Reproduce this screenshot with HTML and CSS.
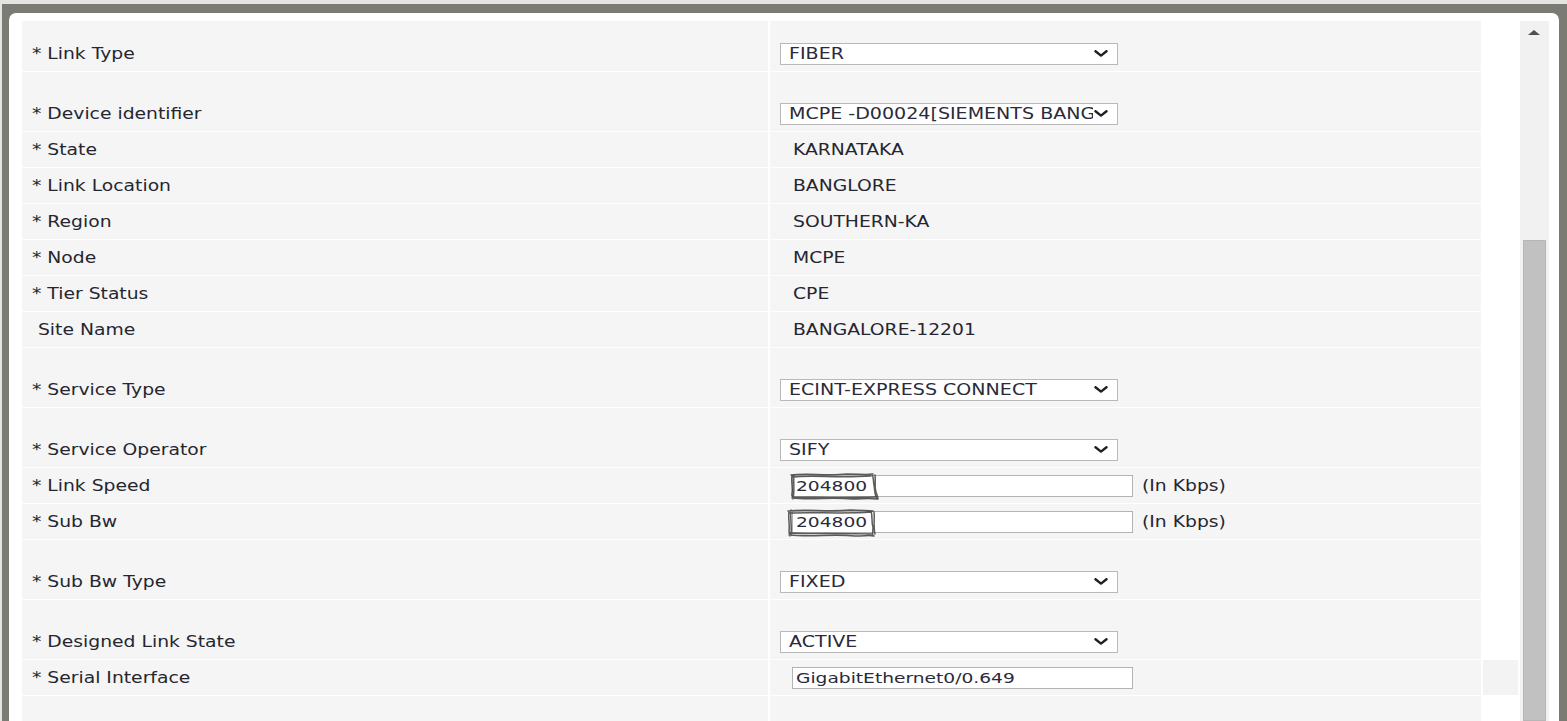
FILE: index.html
```html
<!DOCTYPE html>
<html lang="en">
<head>
<meta charset="utf-8">
<title>Link details</title>
<link rel="stylesheet" href="styles.css">
</head>
<body>
<div class="frame">
  <div class="panel">
    <div class="form">
      <div class="row first">
        <div class="cell label"><span class="t">* Link Type</span></div>
        <div class="cell value">
          <div class="select"><div class="val"><span class="t">FIBER</span></div><svg class="chev" viewBox="0 0 14 7" width="14" height="7"><polyline points="1.5,1.2 7,5.6 12.5,1.2"/></svg></div>
        </div>
      </div>
      <div class="row tall">
        <div class="cell label"><span class="t">* Device identifier</span></div>
        <div class="cell value">
          <div class="select"><div class="val"><span class="t">MCPE -D00024[SIEMENTS BANGALORE]</span></div><svg class="chev" viewBox="0 0 14 7" width="14" height="7"><polyline points="1.5,1.2 7,5.6 12.5,1.2"/></svg></div>
        </div>
      </div>
      <div class="row">
        <div class="cell label"><span class="t">* State</span></div>
        <div class="cell value text"><span class="t">KARNATAKA</span></div>
      </div>
      <div class="row">
        <div class="cell label"><span class="t">* Link Location</span></div>
        <div class="cell value text"><span class="t">BANGLORE</span></div>
      </div>
      <div class="row">
        <div class="cell label"><span class="t">* Region</span></div>
        <div class="cell value text"><span class="t">SOUTHERN-KA</span></div>
      </div>
      <div class="row">
        <div class="cell label"><span class="t">* Node</span></div>
        <div class="cell value text"><span class="t">MCPE</span></div>
      </div>
      <div class="row">
        <div class="cell label"><span class="t">* Tier Status</span></div>
        <div class="cell value text"><span class="t">CPE</span></div>
      </div>
      <div class="row">
        <div class="cell label"><span class="t">&nbsp;Site Name</span></div>
        <div class="cell value text"><span class="t">BANGALORE-12201</span></div>
      </div>
      <div class="row tall">
        <div class="cell label"><span class="t">* Service Type</span></div>
        <div class="cell value">
          <div class="select"><div class="val"><span class="t">ECINT-EXPRESS CONNECT</span></div><svg class="chev" viewBox="0 0 14 7" width="14" height="7"><polyline points="1.5,1.2 7,5.6 12.5,1.2"/></svg></div>
        </div>
      </div>
      <div class="row tall">
        <div class="cell label"><span class="t">* Service Operator</span></div>
        <div class="cell value">
          <div class="select"><div class="val"><span class="t">SIFY</span></div><svg class="chev" viewBox="0 0 14 7" width="14" height="7"><polyline points="1.5,1.2 7,5.6 12.5,1.2"/></svg></div>
        </div>
      </div>
      <div class="row">
        <div class="cell label"><span class="t">* Link Speed</span></div>
        <div class="cell value">
          <div class="input marked"><span class="t">204800</span>
            <svg class="sketch" viewBox="0 0 96 30" width="96" height="30"><path d="M5 3 C4 9 6 16 5 21 C4 24 6 26 6 27 M7 4 C6 11 8 18 6 26 M4 3 C20 1 40 4 60 2 C72 2 80 3 86 2 M6 5 C25 3 50 6 84 4 M85 2 C87 6 86 9 87 13 C88 18 87 22 90 27 M88 3 C89 9 87 14 89 20 C90 23 91 25 91 27 M5 26 C25 28 45 25 65 27 C75 27 82 26 90 27 M6 25 C30 25 55 26 88 25"/></svg>
          </div>
          <span class="unit t">(In Kbps)</span>
        </div>
      </div>
      <div class="row">
        <div class="cell label"><span class="t">* Sub Bw</span></div>
        <div class="cell value">
          <div class="input marked"><span class="t">204800</span>
            <svg class="sketch sketch2" viewBox="0 0 92 30" width="92" height="30"><path d="M4 3 C3 10 5 18 4 23 C4 26 5 27 5 28 M6 2 C5 9 7 18 6 27 M3 3 C20 1 45 4 65 2 C75 2 82 3 88 3 M4 5 C30 4 60 6 86 4 M86 3 C88 8 86 14 88 19 C88 23 87 25 88 28 M89 4 C90 10 88 17 90 26 M4 27 C25 29 50 26 70 28 C80 28 85 27 89 28 M5 25 C30 26 60 25 87 26"/></svg>
          </div>
          <span class="unit t">(In Kbps)</span>
        </div>
      </div>
      <div class="row tall">
        <div class="cell label"><span class="t">* Sub Bw Type</span></div>
        <div class="cell value">
          <div class="select"><div class="val"><span class="t">FIXED</span></div><svg class="chev" viewBox="0 0 14 7" width="14" height="7"><polyline points="1.5,1.2 7,5.6 12.5,1.2"/></svg></div>
        </div>
      </div>
      <div class="row tall">
        <div class="cell label"><span class="t">* Designed Link State</span></div>
        <div class="cell value">
          <div class="select"><div class="val"><span class="t">ACTIVE</span></div><svg class="chev" viewBox="0 0 14 7" width="14" height="7"><polyline points="1.5,1.2 7,5.6 12.5,1.2"/></svg></div>
        </div>
      </div>
      <div class="row">
        <div class="cell label"><span class="t">* Serial Interface</span></div>
        <div class="cell value">
          <div class="input"><span class="t">GigabitEthernet0/0.649</span></div>
        </div>
        <div class="cell extra"></div>
      </div>
      <div class="row">
        <div class="cell label"></div>
        <div class="cell value"></div>
      </div>
    </div>
    <div class="scrollbar">
      <div class="arrow-up"></div>
      <div class="thumb"></div>
    </div>
  </div>
</div>
</body>
</html>
```

FILE: styles.css
```css
html, body {
  margin: 0;
  padding: 0;
  height: 100%;
  overflow: hidden;
  background: #e4e4e0;
}

body {
  font-family: "DejaVu Sans", Verdana, sans-serif;
  font-size: 15px;
  color: #262630;
}

.frame {
  box-sizing: border-box;
  margin: 4px 0 0 2px;
  height: calc(100vh - 4px);
  padding: 9px 8px 0 7px;
  background: #7a7b73;
}

.panel {
  box-sizing: border-box;
  height: 100%;
  display: flex;
  align-items: stretch;
  padding: 8px 11px 0 13px;
  background: #ffffff;
  border-radius: 7px 7px 0 0;
}

.form {
  width: 1496px;
  flex: none;
  overflow: hidden;
}

.row {
  display: grid;
  grid-template-columns: 746px 711px 35px;
  column-gap: 2px;
  margin-bottom: 1px;
}

.cell {
  height: 35px;
  display: flex;
  align-items: center;
  background: #f5f5f5;
}

.row.tall .cell {
  padding-top: 24px;
}

.row.first .cell {
  padding-top: 15px;
}

.cell.label {
  padding-left: 10px;
}

.cell.value.text {
  padding-left: 23px;
}

.cell.extra {
  background: #f3f3f3;
}

.t {
  display: inline-block;
  white-space: pre;
  transform: scaleX(1.25);
  transform-origin: 0 50%;
}

.select {
  box-sizing: border-box;
  position: relative;
  margin-left: 10px;
  width: 338px;
  height: 22px;
  display: flex;
  align-items: center;
  padding-left: 8px;
  background: #ffffff;
  border: 1px solid #b9b9b9;
  color: #2a2a3a;
}

.select .val {
  width: 304px;
  height: 20px;
  display: flex;
  align-items: center;
  overflow: hidden;
}

.select .t {
  font-size: 15px;
  transform: scaleX(1.27);
}

.chev {
  position: absolute;
  right: 9px;
  top: 6px;
}

.chev polyline {
  fill: none;
  stroke: #1f1f24;
  stroke-width: 2.4;
  stroke-linecap: round;
  stroke-linejoin: round;
}

.input {
  box-sizing: border-box;
  position: relative;
  margin-left: 22px;
  width: 341px;
  height: 22px;
  display: flex;
  align-items: center;
  padding-left: 3px;
  background: #ffffff;
  border: 1px solid #b3b3b3;
  color: #2a2a3a;
}

.input .t {
  font-size: 14px;
  transform: scaleX(1.33);
}

.sketch {
  position: absolute;
  left: -6px;
  top: -4px;
  overflow: visible;
}

.sketch2 {
  left: -8px;
  top: -4px;
}

.sketch path {
  fill: none;
  stroke: #333333;
  stroke-width: 1.5;
  stroke-linecap: round;
  opacity: 0.8;
}

.unit {
  margin-left: 9px;
  color: #262630;
}

.scrollbar {
  flex: none;
  width: 29px;
  margin-left: 2px;
  display: flex;
  flex-direction: column;
  background: #f1f1f1;
}

.arrow-up {
  flex: none;
  margin: 9px 0 0 8px;
  width: 0;
  height: 0;
  border-left: 6.5px solid transparent;
  border-right: 6.5px solid transparent;
  border-bottom: 5px solid #505050;
}

.thumb {
  flex: 1;
  box-sizing: border-box;
  margin: 205px 3px 0 3px;
  background: #c1c1c1;
  border: 1px solid #b6b6b6;
}
```
